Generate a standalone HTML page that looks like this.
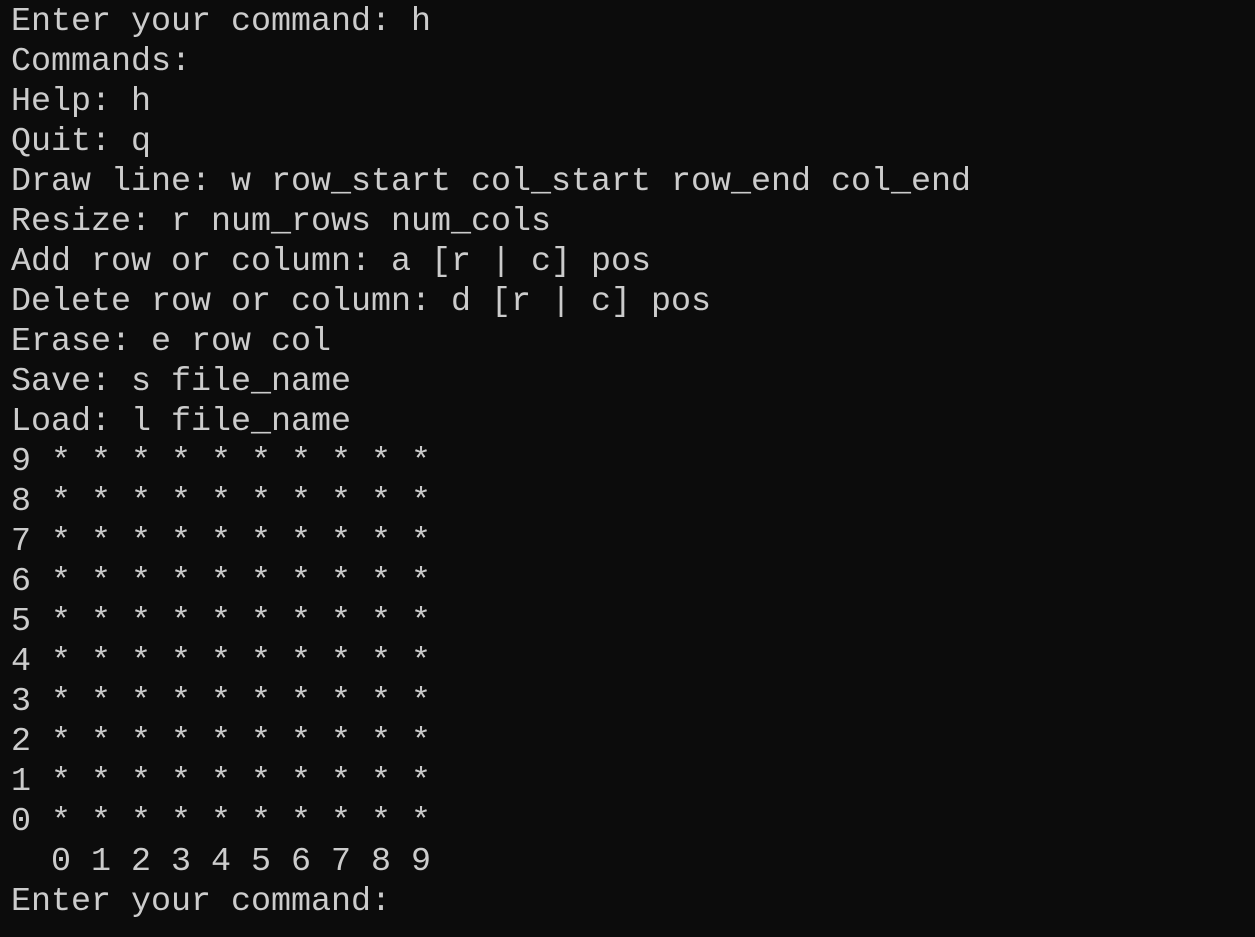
<!DOCTYPE html>
<html><head><meta charset="utf-8"><style>
html,body{margin:0;padding:0;background:#0c0c0c;width:1255px;height:937px;overflow:hidden}
pre{margin:0;padding:2px 0 0 11px;font-family:"Liberation Mono",monospace;font-size:33.33px;line-height:40px;color:#cccccc;white-space:pre}
</style></head><body><pre>Enter your command: h
Commands:
Help: h
Quit: q
Draw line: w row_start col_start row_end col_end
Resize: r num_rows num_cols
Add row or column: a [r | c] pos
Delete row or column: d [r | c] pos
Erase: e row col
Save: s file_name
Load: l file_name
9 * * * * * * * * * *
8 * * * * * * * * * *
7 * * * * * * * * * *
6 * * * * * * * * * *
5 * * * * * * * * * *
4 * * * * * * * * * *
3 * * * * * * * * * *
2 * * * * * * * * * *
1 * * * * * * * * * *
0 * * * * * * * * * *
  0 1 2 3 4 5 6 7 8 9
Enter your command:</pre></body></html>
